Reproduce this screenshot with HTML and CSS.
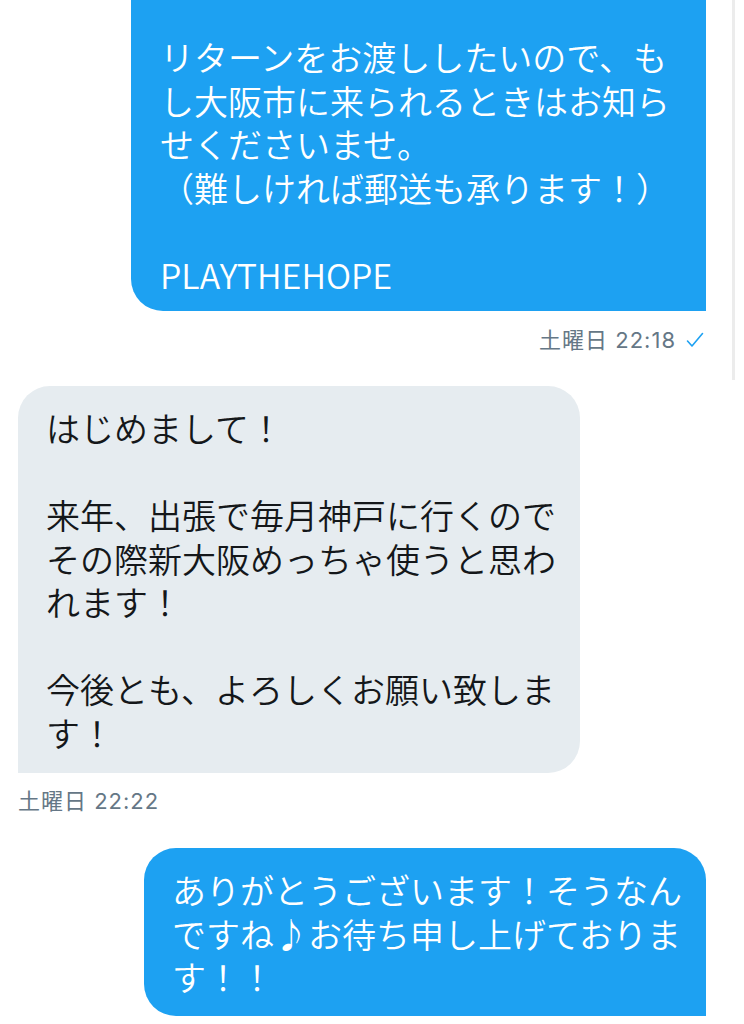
FILE: index.html
```html
<!DOCTYPE html>
<html lang="ja">
<head>
<meta charset="utf-8">
<title>DM</title>
<link rel="stylesheet" href="styles.css">
</head>
<body>
<div class="chat">
  <div class="msg out">
    <div class="bubble bubble-first">リターンをお渡ししたいので、もし大阪市に来られるときはお知らせくださいませ。<br>（難しければ郵送も承ります！）<br><br>PLAYTHEHOPE</div>
    <div class="meta meta-out">土曜日 22:18<svg class="check" width="18" height="16" viewBox="0 0 18 16"><polyline points="1.5,9 6,14 16.5,1.5" fill="none" stroke="#1da1f2" stroke-width="1.6" stroke-linecap="round" stroke-linejoin="round"/></svg></div>
  </div>
  <div class="msg in">
    <div class="bubble bubble-in">はじめまして！<br><br>来年、出張で毎月神戸に行くのでその際新大阪めっちゃ使うと思われます！<br><br>今後とも、よろしくお願い致します！</div>
    <div class="meta meta-in">土曜日 22:22</div>
  </div>
  <div class="msg out">
    <div class="bubble bubble-last">ありがとうございます！そうなんですね♪お待ち申し上げております！！</div>
  </div>
</div>
</body>
</html>
```
FILE: styles.css
```css
html, body {
  margin: 0;
  padding: 0;
  background: #ffffff;
}
body {
  width: 744px;
  height: 1024px;
  overflow: hidden;
  font-family: "Noto Sans CJK JP", "Noto Sans", sans-serif;
  position: relative;
}
body::after {
  content: "";
  position: absolute;
  top: 0;
  right: 9px;
  width: 3px;
  height: 380px;
  background: #ececec;
}
.chat {
  display: flex;
  flex-direction: column;
  padding: 0 38px 0 18px;
}
.msg {
  display: flex;
  flex-direction: column;
}
.msg.out {
  align-items: flex-end;
}
.msg.in {
  align-items: flex-start;
  margin-top: 34px;
}
.bubble {
  box-sizing: border-box;
  font-size: 34px;
  font-weight: 350;
  line-height: 43.5px;
  letter-spacing: 0;
}
.bubble-first {
  width: 575px;
  padding: 35px 30px 15px 29px;
  background: #1da1f2;
  color: #ffffff;
  border-radius: 0 0 0 32px;
}
.bubble-in {
  width: 562px;
  padding: 20px 20px 19px 28px;
  background: #e6ecf0;
  color: #14171a;
  border-radius: 32px 32px 32px 0;
}
.bubble-last {
  width: 562px;
  margin-top: 35px;
  padding: 20px 20px 17px 28px;
  background: #1da1f2;
  color: #ffffff;
  border-radius: 32px 32px 0 32px;
}
.meta {
  display: flex;
  align-items: center;
  font-family: "Inter", "Noto Sans CJK JP", sans-serif;
  font-size: 22px;
  font-weight: 400;
  letter-spacing: 1px;
  line-height: 24px;
  color: #657786;
}
.meta-out {
  margin-top: 17px;
  margin-right: 2px;
}
.meta-in {
  margin-top: 16px;
}
.check {
  margin-left: 10px;
}
```
